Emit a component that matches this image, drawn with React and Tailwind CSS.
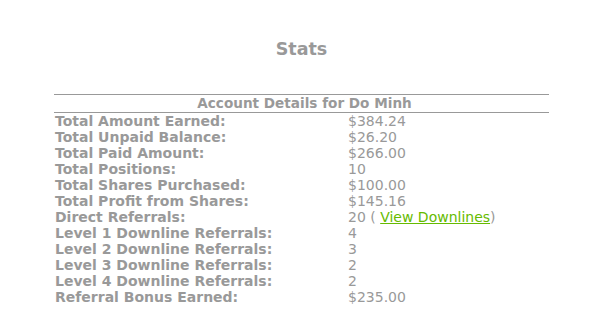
const rows = [
  ['Total Amount Earned:', '$384.24'],
  ['Total Unpaid Balance:', '$26.20'],
  ['Total Paid Amount:', '$266.00'],
  ['Total Positions:', '10'],
  ['Total Shares Purchased:', '$100.00'],
  ['Total Profit from Shares:', '$145.16'],
  ['Direct Referrals:', 'link'],
  ['Level 1 Downline Referrals:', '4'],
  ['Level 2 Downline Referrals:', '3'],
  ['Level 3 Downline Referrals:', '2'],
  ['Level 4 Downline Referrals:', '2'],
  ['Referral Bonus Earned:', '$235.00'],
];

export default function App() {
  return (
    <div className="w-[595px] h-[332px] bg-white text-[#999] font-['DejaVu_Sans',Verdana,sans-serif] pl-[54px] pr-[46px]">
      <h1 className="pt-[39px] h-[94px] text-center font-bold text-[17.5px] leading-[20px]">Stats</h1>
      <div className="border-t border-[#999] border-b border-b-[#999] h-[19px] flex items-center justify-center pl-[6px] font-bold text-[13.6px] leading-[17px]">
        Account Details for Do Minh
      </div>
      <div className="grid grid-cols-[294px_1fr]">
        {rows.map(([label, value]) => (
          <div key={label} className="contents">
            <div className="font-bold text-[14px] leading-[16px] pl-px">{label}</div>
            <div className="text-[14px] leading-[16px]">
              {value === 'link' ? (
                <>
                  20 ( <a href="#" className="text-[#66bb00] underline">View Downlines</a>)
                </>
              ) : (
                value
              )}
            </div>
          </div>
        ))}
      </div>
    </div>
  );
}
